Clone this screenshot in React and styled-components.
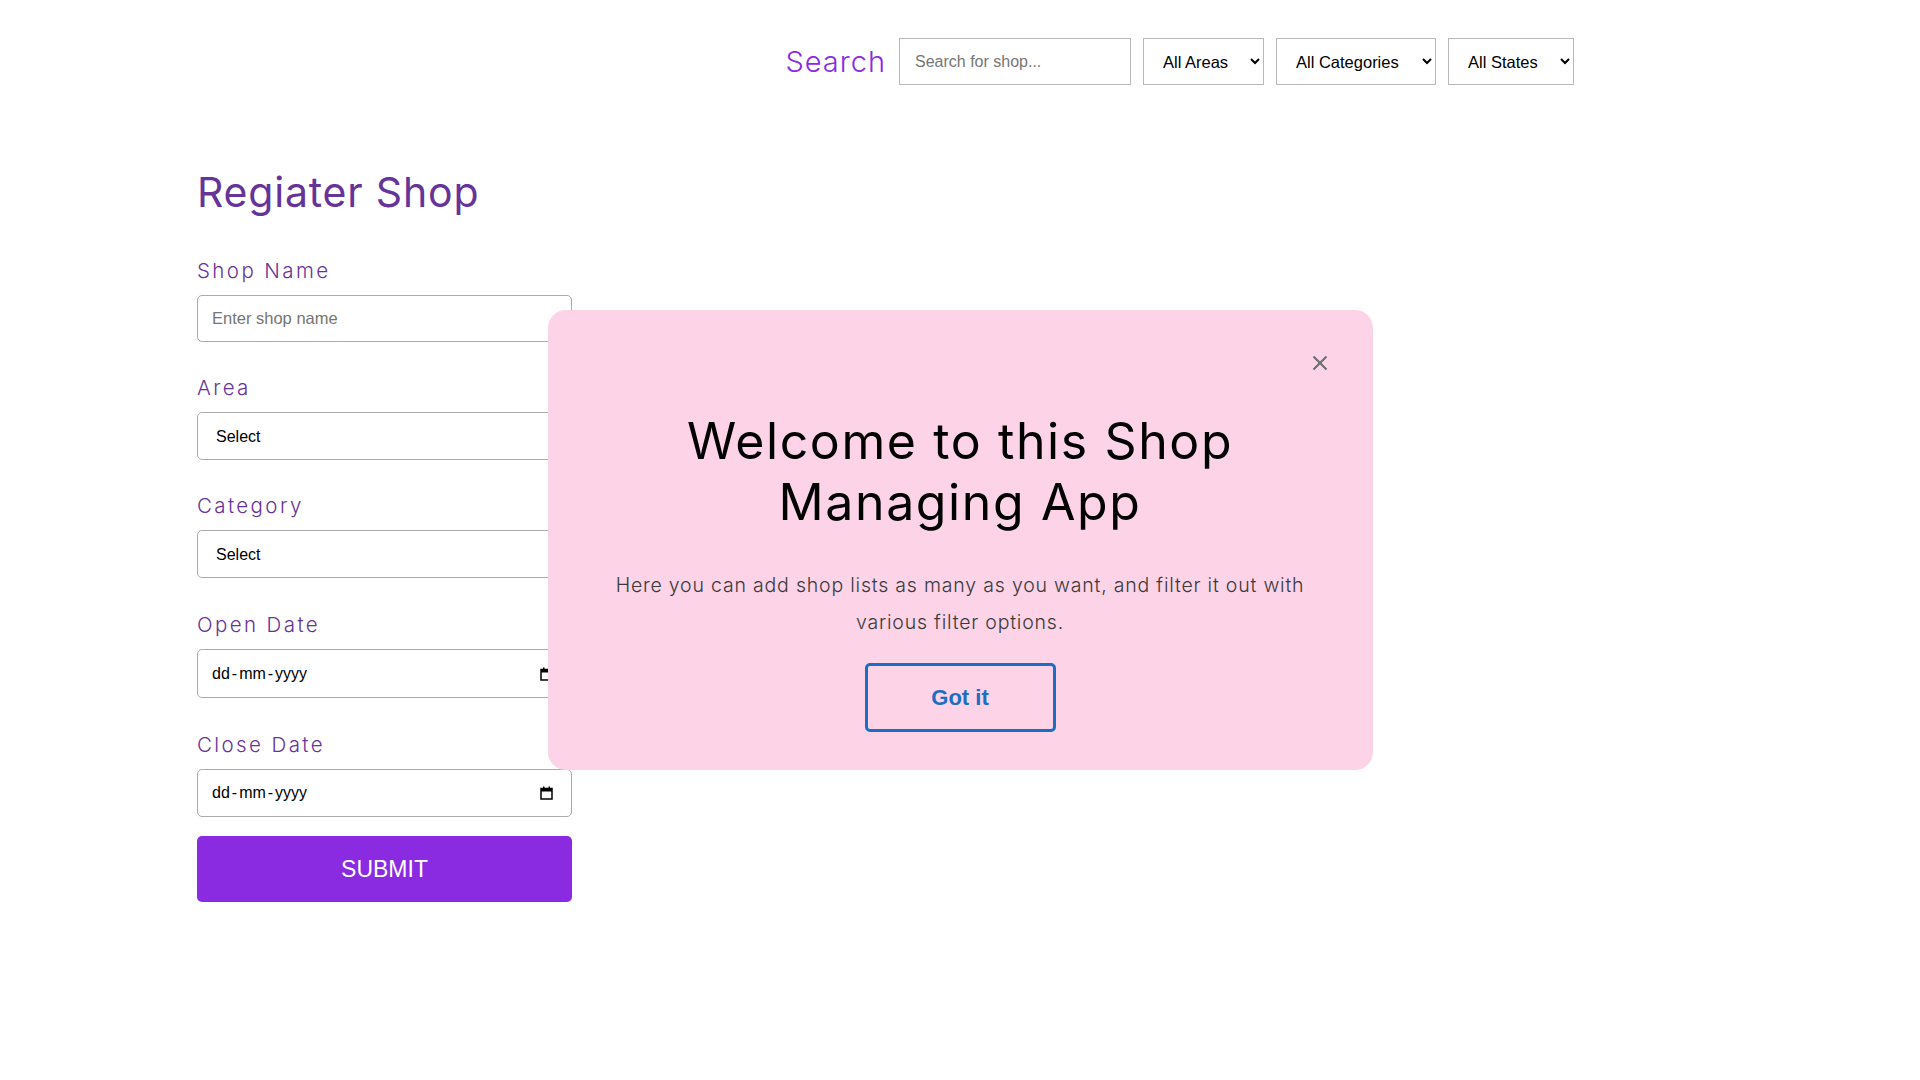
import React from "react";
import styled, { createGlobalStyle } from "styled-components";

const GlobalStyle = createGlobalStyle`
  html, body {
    margin: 0;
    padding: 0;
    background: #ffffff;
  }
  body {
    font-family: "Inter", "Noto Sans", sans-serif;
    color: #111;
  }
  * { box-sizing: border-box; }
`;

const Page = styled.div`
  min-height: 1080px;
  width: 1920px;
`;

const Header = styled.header`
  display: flex;
  justify-content: flex-end;
  align-items: center;
  gap: 12px;
  padding: 38px 346px 0 0;
`;

const SearchLabel = styled.span`
  font-family: "Inter", sans-serif;
  font-size: 29px;
  font-weight: 300;
  color: #8a2be2;
  letter-spacing: 1px;
  margin-right: 1px;
`;

const SearchInput = styled.input`
  width: 232px;
  height: 47px;
  border: 1px solid #b8b8b8;
  border-radius: 0;
  padding: 0 15px;
  font-family: "Liberation Sans", Arial, sans-serif;
  font-size: 16px;
  color: #222;
  outline: none;
  &::placeholder { color: #767676; }
`;

const FilterSelect = styled.select`
  width: ${(p) => p.$w}px;
  height: 47px;
  border: 1px solid #b8b8b8;
  border-radius: 0;
  background: #fff;
  padding: 0 4px 0 15px;
  font-family: "Liberation Sans", Arial, sans-serif;
  font-size: 16.5px;
  color: #000;
`;

const Main = styled.main`
  padding-left: 197px;
`;

const Title = styled.h1`
  margin: 83px 0 0;
  font-size: 41px;
  line-height: 49px;
  font-weight: 400;
  color: #663399;
  letter-spacing: 0.8px;
`;

const Form = styled.form`
  width: 375px;
  margin-top: 41px;
  display: flex;
  flex-direction: column;
`;

const Field = styled.div`
  display: flex;
  flex-direction: column;
  gap: 12px;
  margin-bottom: ${(p) => p.$mb}px;
`;

const Label = styled.label`
  font-size: 20.5px;
  line-height: 25px;
  font-weight: 300;
  color: #663399;
  letter-spacing: 2.4px;
`;

const TextInput = styled.input`
  width: 100%;
  height: 47px;
  border: 1px solid #ababab;
  border-radius: 5px;
  padding: 0 14px;
  font-family: "Liberation Sans", Arial, sans-serif;
  font-size: 16.5px;
  color: #222;
  outline: none;
  &::placeholder { color: #757575; }
`;

const FormSelect = styled.select`
  width: 100%;
  height: 48px;
  border: 1px solid #ababab;
  border-radius: 5px;
  background: #fff;
  padding: 0 14px;
  font-family: "Liberation Sans", Arial, sans-serif;
  font-size: 16px;
  color: #000;
`;

const DateBox = styled.div`
  width: 100%;
  height: ${(p) => p.$h}px;
  border: 1px solid #ababab;
  border-radius: 5px;
  background: #fff;
  padding: 0 18px 0 14px;
  display: flex;
  align-items: center;
  justify-content: space-between;
  font-family: "Liberation Sans", Arial, sans-serif;
  font-size: 16px;
  color: #000;
`;

const DateText = styled.span`
  display: flex;
  align-items: center;
`;

const DateSep = styled.span`
  margin: 0 2px;
`;

const SubmitButton = styled.button`
  width: 100%;
  height: 66px;
  border: none;
  border-radius: 5px;
  background: #8a2be2;
  color: #fff;
  font-family: "Liberation Sans", Arial, sans-serif;
  font-size: 23px;
  cursor: pointer;
`;

const Overlay = styled.div`
  position: fixed;
  inset: 0;
  display: flex;
  align-items: center;
  justify-content: center;
  pointer-events: none;
`;

const Modal = styled.div`
  pointer-events: auto;
  width: 825px;
  height: 460px;
  background: #fdd3e8;
  border-radius: 18px;
  padding: 43px 43px 38px;
  display: flex;
  flex-direction: column;
  align-items: center;
`;

const CloseRow = styled.div`
  align-self: stretch;
  display: flex;
  justify-content: flex-end;
`;

const CloseButton = styled.button`
  width: 20px;
  height: 20px;
  padding: 0;
  border: none;
  background: transparent;
  display: flex;
  align-items: center;
  justify-content: center;
  cursor: pointer;
`;

const ModalTitle = styled.h2`
  margin: 38px 0 0;
  max-width: 640px;
  font-size: 50px;
  line-height: 61px;
  font-weight: 400;
  color: #000;
  text-align: center;
  letter-spacing: 1.6px;
`;

const ModalText = styled.p`
  margin: 34px 0 0;
  max-width: 705px;
  font-size: 19.5px;
  line-height: 37px;
  font-weight: 300;
  color: #3a3a3a;
  text-align: center;
  letter-spacing: 0.8px;
`;

const GotItButton = styled.button`
  margin-top: 22px;
  width: 191px;
  height: 69px;
  border: 3px solid #1b6ec2;
  border-radius: 5px;
  background: transparent;
  color: #1b6ec2;
  font-family: "Liberation Sans", Arial, sans-serif;
  font-weight: 700;
  font-size: 22px;
  cursor: pointer;
`;

const CalendarIcon = () => (
  <svg width="13" height="14" viewBox="0 0 13 14" fill="none">
    <rect x="1" y="2.5" width="11" height="10.5" stroke="#000" strokeWidth="1.5" />
    <rect x="1" y="2.5" width="11" height="3" fill="#000" />
    <rect x="3" y="0.5" width="1.5" height="3" fill="#000" />
    <rect x="8.5" y="0.5" width="1.5" height="3" fill="#000" />
  </svg>
);

const CloseIcon = () => (
  <svg width="16" height="16" viewBox="0 0 16 16">
    <path d="M1.5 1.5 L14.5 14.5 M14.5 1.5 L1.5 14.5" stroke="#6b6b6b" strokeWidth="2" strokeLinecap="butt" />
  </svg>
);

const DateField = ({ h }) => (
  <DateBox $h={h}>
    <DateText>
      dd<DateSep>-</DateSep>mm<DateSep>-</DateSep>yyyy
    </DateText>
    <CalendarIcon />
  </DateBox>
);

export default function App() {
  return (
    <Page>
      <GlobalStyle />
      <Header>
        <SearchLabel>Search</SearchLabel>
        <SearchInput placeholder="Search for shop..." />
        <FilterSelect $w={121} defaultValue="all">
          <option value="all">All Areas</option>
        </FilterSelect>
        <FilterSelect $w={160} defaultValue="all">
          <option value="all">All Categories</option>
        </FilterSelect>
        <FilterSelect $w={126} defaultValue="all">
          <option value="all">All States</option>
        </FilterSelect>
      </Header>
      <Main>
        <Title>Regiater Shop</Title>
        <Form onSubmit={(e) => e.preventDefault()}>
          <Field $mb={33}>
            <Label>Shop Name</Label>
            <TextInput placeholder="Enter shop name" />
          </Field>
          <Field $mb={33}>
            <Label>Area</Label>
            <FormSelect defaultValue="">
              <option value="">Select</option>
            </FormSelect>
          </Field>
          <Field $mb={34}>
            <Label>Category</Label>
            <FormSelect defaultValue="">
              <option value="">Select</option>
            </FormSelect>
          </Field>
          <Field $mb={34}>
            <Label>Open Date</Label>
            <DateField h={49} />
          </Field>
          <Field $mb={19}>
            <Label>Close Date</Label>
            <DateField h={48} />
          </Field>
          <SubmitButton type="submit">SUBMIT</SubmitButton>
        </Form>
      </Main>
      <Overlay>
        <Modal>
          <CloseRow>
            <CloseButton aria-label="Close">
              <CloseIcon />
            </CloseButton>
          </CloseRow>
          <ModalTitle>Welcome to this Shop Managing App</ModalTitle>
          <ModalText>
            Here you can add shop lists as many as you want, and filter it out with various filter options.
          </ModalText>
          <GotItButton>Got it</GotItButton>
        </Modal>
      </Overlay>
    </Page>
  );
}
